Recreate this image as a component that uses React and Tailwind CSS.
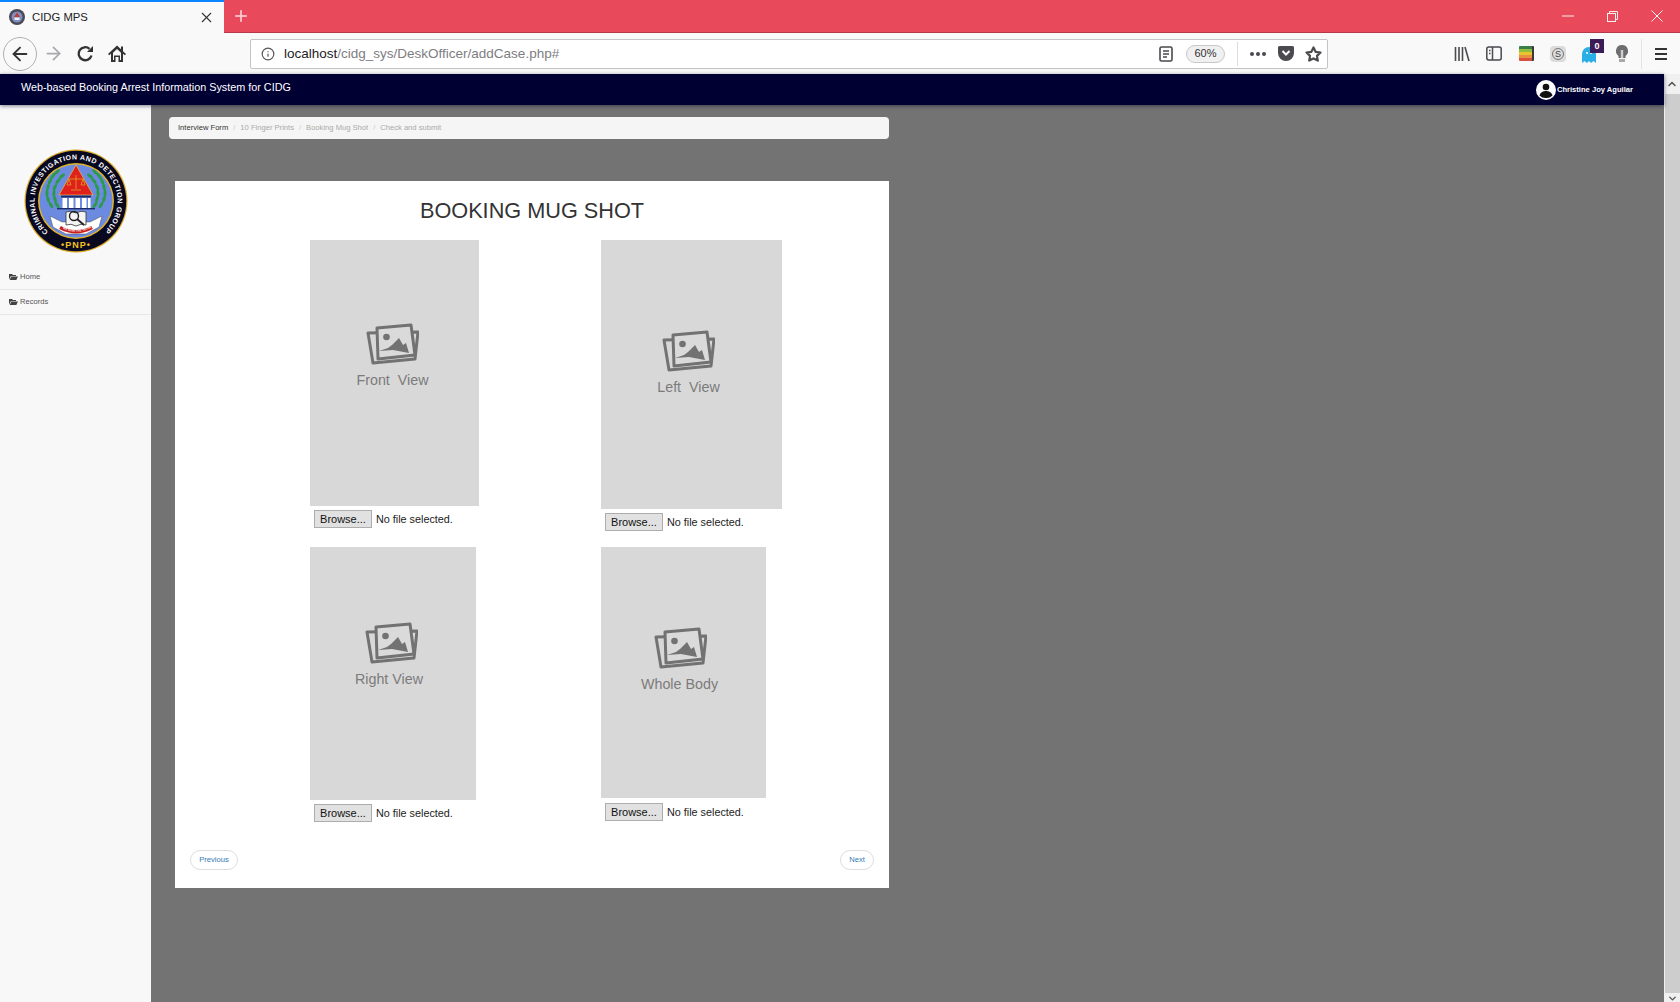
import { ArrowLeft, ArrowRight, Info, X, Plus, ChevronUp, ChevronDown } from "lucide-react";

const arial = "font-['Liberation_Sans',Arial,sans-serif]";

// leaves of one laurel branch, mirrored for the other side
const leaves = [[33, 23, -45], [29, 27, -55], [26, 32, -65], [24, 38, -80], [23, 44, -90], [24, 50, -105], [27, 56, -120], [38, 27, -40], [34, 32, -50], [31, 38, -65], [30, 44, -85], [31, 50, -105], [33, 56, -125]];

function Logo() {
  return (
    <svg viewBox="0 0 104 104" className="w-[104px] h-[104px]">
      <defs>
        <path id="ringArc" d="M 24.200 82.800 A 41.500 41.500 0 1 1 79.800 82.800" />
        <path id="bannerArc" d="M 36 78.500 Q 52 87 68 78.500" />
      </defs>
      <circle cx="52" cy="52" r="51.500" fill="#d8a928" />
      <circle cx="52" cy="52" r="50.300" fill="#080820" />
      <circle cx="52" cy="52" r="38" fill="#e0b32a" />
      <circle cx="52" cy="52" r="36.500" fill="#6c8be0" />
      <text fill="#fff" fontSize="7" fontWeight="700" fontFamily="Liberation Sans, Arial, sans-serif">
        <textPath href="#ringArc" textLength="198" lengthAdjust="spacing">CRIMINAL INVESTIGATION AND DETECTION GROUP</textPath>
      </text>
      <text x="52" y="99" textAnchor="middle" fill="#f3c31b" fontSize="9" fontWeight="700" fontFamily="Liberation Sans, Arial, sans-serif" letterSpacing="1">•PNP•</text>
      {leaves.map(([x, y, r], i) => (
        <g key={i} fill="#2a9a45">
          <ellipse cx={x} cy={y} rx="3.600" ry="1.500" transform={`rotate(${r} ${x} ${y})`} />
          <ellipse cx={104 - x} cy={y} rx="3.600" ry="1.500" transform={`rotate(${-r} ${104 - x} ${y})`} />
        </g>
      ))}
      <path d="M52 16 L69 46 H35 Z" fill="#e0201c" stroke="#f3d23a" strokeWidth=".6" />
      <path d="M52 26 V40 M45 30 H59 M45 30 L43 36 H47 Z M59 30 L57 36 H61 Z M47 41 H57" stroke="#d9a520" strokeWidth=".8" fill="none" />
      <rect x="37" y="46.500" width="30" height="2" fill="#1d2b6b" />
      <g fill="#fff">
        <rect x="38.500" y="49" width="4.500" height="10" />
        <rect x="45" y="49" width="4.500" height="10" />
        <rect x="51.500" y="49" width="4.500" height="10" />
        <rect x="58" y="49" width="4.500" height="10" />
        <rect x="64" y="49" width="2.500" height="10" />
      </g>
      <rect x="33" y="59" width="38" height="1.400" fill="#1d2b6b" />
      <path d="M26 67 L38 73 L66 73 L78 67 L75 78 L62 85 H42 L29 78 Z" fill="#fff" stroke="#333" strokeWidth=".4" />
      <path d="M36 78.500 Q52 87 68 78.500" stroke="#c81e1e" strokeWidth="3.600" fill="none" />
      <text fill="#fff" fontSize="2.800" fontWeight="700" fontFamily="Liberation Sans, Arial, sans-serif">
        <textPath href="#bannerArc" startOffset="3">WE SEEK THE TRUTH</textPath>
      </text>
      <path d="M42 63 Q47 61 52 64 Q57 61 62 63 V76 Q57 74 52 77 Q47 74 42 76 Z" fill="#f4f4f4" stroke="#333" strokeWidth=".8" />
      <circle cx="50" cy="67" r="4.500" fill="none" stroke="#222" strokeWidth="1.400" />
      <path d="M53 70 L60 76" stroke="#222" strokeWidth="1.800" />
    </svg>
  );
}

function Photos() {
  return (
    <svg viewBox="0 0 53 42" className="w-[53px] h-[42px] block text-[#737273]">
      <path d="M2 10 L52 9 L49 36 L7 40 Z" fill="none" stroke="currentColor" strokeWidth="3" strokeLinejoin="round" />
      <path d="M11 5 L45 2 L49 32 L12 36 Z" fill="#dbdadb" stroke="currentColor" strokeWidth="3" strokeLinejoin="round" />
      <circle cx="20.500" cy="14" r="3.300" fill="currentColor" />
      <path d="M13 28 L22 25 L26 22 L33 15 L37 22 L40 20 L43 30 L27 27 Z" fill="currentColor" />
    </svg>
  );
}

function ViewBox({ label, w, h, gap, iconX, labelX, pb }) {
  return (
    <div>
      <div className="bg-[#d9d8d9] flex flex-col items-center justify-center" style={{ width: w, height: h, paddingBottom: pb }}>
        <div style={{ transform: `translateX(${iconX}px)` }}><Photos /></div>
        <div className="text-[14.300px] leading-[18px] text-[#7b7b7b] mt-[6px] whitespace-pre" style={{ transform: `translateX(${labelX}px)` }}>{label}</div>
      </div>
      <div className="flex items-center gap-[4px] pl-[4px]" style={{ marginTop: gap }}>
        <button className="w-[58px] h-[18px] bg-[#e1e1e1] border border-[#adadad] text-[11px] leading-none text-[#111]">Browse...</button>
        <span className="text-[10.800px] text-[#222]">No file selected.</span>
      </div>
    </div>
  );
}

function ToolIcon({ children }) {
  return <div className="w-[32px] h-[32px] flex items-center justify-center text-[#4a4a4f]">{children}</div>;
}

export default function App() {
  return (
    <div className={`${arial} h-[1002px] w-[1680px] overflow-hidden flex flex-col bg-[#737373]`}>
      {/* tab strip */}
      <div className="h-[33px] bg-[#e84a5c] flex items-stretch shrink-0 border-b border-[#b23a4a]">
        <div className="w-[224px] h-[33px] bg-[#f9f9fa] border-t-2 border-[#0a84ff] flex items-center pl-[9px] pr-[9px]">
          <svg width="16" height="16" viewBox="0 0 16 16" className="-mt-[1px]">
            <circle cx="8" cy="8" r="8" fill="#4a4a55" />
            <circle cx="8" cy="8" r="5.500" fill="#7d8fc4" />
            <path d="M8 3.500 L11 8 H5 Z" fill="#c0392b" />
            <rect x="5.500" y="8.500" width="5" height="2.500" fill="#eee" />
          </svg>
          <span className="text-[11.300px] text-[#222] ml-[7px] flex-1 -mt-[1px]">CIDG MPS</span>
          <X size={17} strokeWidth={1.600} className="text-[#333]" />
        </div>
        <div className="w-[34px] flex items-center justify-center text-[#fbdde1]"><Plus size={18} strokeWidth={2} /></div>
        <div className="flex-1" />
        <div className="flex items-center text-[#fdeef0] pr-[17px] gap-[33px]">
          <svg width="12" height="2" viewBox="0 0 12 2" stroke="currentColor"><path d="M0 1h12" /></svg>
          <svg width="11" height="11" viewBox="0 0 11 11" fill="none" stroke="currentColor"><rect x=".5" y="2.500" width="8" height="8" /><path d="M2.500 2.500V.5h8v8h-2" /></svg>
          <svg width="12" height="12" viewBox="0 0 12 12" stroke="currentColor"><path d="M.5.5l11 11M11.500.5l-11 11" /></svg>
        </div>
      </div>

      {/* toolbar */}
      <div className="h-[41px] bg-[#f9f9fa] flex items-center shrink-0 relative">
        <div className="ml-[3px] w-[34px] h-[34px] rounded-full border border-[#b1b1b3] flex items-center justify-center text-[#333]"><ArrowLeft size={22} strokeWidth={2} /></div>
        <div className="w-[32px] flex justify-center text-[#a9a9ac]"><ArrowRight size={21} strokeWidth={2} /></div>
        <div className="w-[32px] flex justify-center">
          <svg width="17" height="17" viewBox="0 0 17 17" fill="none" stroke="#333" strokeWidth="2.300"><path d="M14.500 10.500A6.500 6.500 0 1 1 12.500 3.800" /><path d="M16 1v6h-6z" fill="#333" stroke="none" /></svg>
        </div>
        <div className="w-[32px] flex justify-center">
          <svg width="18" height="17" viewBox="0 0 18 17"><path d="M9 .5L0 9l1.200 1.300L3 8.700V17h4.500v-5h3v5H15V8.700l1.800 1.600L18 9l-3-2.800V1.500h-2v2.800z" fill="#333" /><path d="M5 7.700L9 4l4 3.700V15h-1v-4.500H6V15H5z" fill="#f9f9fa" /></svg>
        </div>
        <div className="ml-[117px] w-[1078px] h-[30px] bg-white border border-[#c4c4c6] rounded-[2px] flex items-center pl-[10px]">
          <Info size={14} className="text-[#555]" />
          <span className="ml-[9px] mt-[1px] text-[13.500px] text-[#222]">localhost<span className="text-[#7d7d82]">/cidg_sys/DeskOfficer/addCase.php#</span></span>
          <div className="flex-1" />
          <svg width="14" height="16" viewBox="0 0 14 16" fill="none" stroke="#4a4a4f" strokeWidth="1.600"><rect x="1" y="1" width="12" height="14" rx="1.500" /><path d="M4 5h6M4 8h6M4 11h4" /></svg>
          <div className="ml-[13px] w-[39px] h-[18px] rounded-full border border-[#c8c8ca] bg-[#f0f0f1] text-[11px] text-[#333] flex items-center justify-center">60%</div>
          <div className="w-px h-[24px] bg-[#dcdcde] ml-[12px]" />
          <div className="ml-[12px] w-[16px] flex gap-[2px]"><span className="w-[4px] h-[4px] rounded-full bg-[#4a4a4f]" /><span className="w-[4px] h-[4px] rounded-full bg-[#4a4a4f]" /><span className="w-[4px] h-[4px] rounded-full bg-[#4a4a4f]" /></div>
          <svg className="ml-[12px]" width="16" height="15" viewBox="0 0 16 15"><path d="M1.500 0h13A1.500 1.500 0 0 1 16 1.500V7a8 8 0 0 1-16 0V1.500A1.500 1.500 0 0 1 1.500 0z" fill="#4a4a4f" /><path d="M4.500 5L8 8.500 11.500 5" stroke="#fff" strokeWidth="2" fill="none" /></svg>
          <svg className="ml-[11px]" width="17" height="16" viewBox="0 0 17 16" fill="none" stroke="#4a4a4f" strokeWidth="2.200" strokeLinejoin="round"><path d="M8.500 1.500l2.100 4.300 4.900.7-3.500 3.400.8 4.700-4.300-2.200-4.300 2.200.8-4.700L1.500 6.500l4.900-.7z" /></svg>
          <div className="w-[5px]" />
        </div>
        <div className="ml-[118px] flex items-center">
          <ToolIcon><svg width="16" height="16" viewBox="0 0 16 16" fill="none" stroke="#4a4a4f" strokeWidth="1.600"><path d="M1.500 1v14M5 1v14M8.500 1v14M11 1l4 14" /></svg></ToolIcon>
          <ToolIcon><svg width="16" height="15" viewBox="0 0 16 15" fill="none" stroke="#4a4a4f" strokeWidth="1.500"><rect x=".8" y="1" width="14.400" height="13" rx="2" /><path d="M6.500 1v13M3 4.500h1.500M3 7.500h1.500" /></svg></ToolIcon>
          <ToolIcon>
            <div className="w-[15px] h-[15px] flex flex-col overflow-hidden rounded-[1px] border-r-2 border-[#3a3a3a]">
              <span className="h-[3px] bg-[#3b7d46]" /><span className="h-[3px] bg-[#8fbf3f]" /><span className="h-[3px] bg-[#e8c42f]" /><span className="h-[3px] bg-[#e8913f]" /><span className="h-[3px] bg-[#d9503f]" />
            </div>
          </ToolIcon>
          <ToolIcon><div className="w-[16px] h-[16px] rounded-[4px] bg-[#dcdcdc] flex items-center justify-center"><span className="w-[12px] h-[12px] rounded-full border border-[#777] text-[9px] leading-[10px] text-center text-[#444]">S</span></div></ToolIcon>
          <div className="w-[32px] h-[32px] flex items-center justify-center relative">
            <svg width="16" height="18" viewBox="0 0 16 18" className="-ml-[3px] mt-[2px]"><path d="M1 8a7 7 0 0 1 14 0v9l-2.500-2-2.500 2-2-2-2 2-2.500-2L1 17z" fill="#29aee6" /><circle cx="6" cy="7" r="1" fill="#fff" /><circle cx="10" cy="7" r="1" fill="#fff" /></svg>
            <div className="absolute top-[1px] right-[2px] w-[14px] h-[14px] bg-[#3c1c56] text-white text-[9px] font-bold leading-[14px] text-center">0</div>
          </div>
          <ToolIcon><svg width="12" height="17" viewBox="0 0 12 17"><path d="M6 0a6 6 0 0 1 3.500 10.900V13h-7v-2.100A6 6 0 0 1 6 0z" fill="#6d6d70" /><rect x="4.800" y="5" width="2.400" height="8" fill="#cfcfcf" /><rect x="3" y="14" width="6" height="3" fill="#a8a8a8" /></svg></ToolIcon>
          <div className="w-px h-[30px] bg-[#e3e3e5] ml-[3px]" />
          <div className="w-[38px] flex justify-center"><svg width="14" height="14" viewBox="0 0 14 14" stroke="#333" strokeWidth="2"><path d="M1 2h12M1 7h12M1 12h12" /></svg></div>
        </div>
      </div>

      {/* page + scrollbar */}
      <div className="flex-1 flex min-h-0">
        <div className="flex-1 flex flex-col min-w-0">
          <div className="h-[31px] bg-[#000033] flex items-center shrink-0 pl-[21px] pr-[31px] shadow-[0_1px_4px_rgba(0,0,40,.5)] relative z-10 text-white">
            <span className="text-[10.800px] -mt-[4px]">Web-based Booking Arrest Information System for CIDG</span>
            <div className="flex-1" />
            <svg width="20" height="20" viewBox="0 0 20 20"><circle cx="10" cy="10" r="10" fill="#fff" /><circle cx="10" cy="7" r="3.300" fill="#111" /><path d="M3.500 15.500c1-3.500 4-4.500 6.500-4.500s5.500 1 6.500 4.500A8.500 8.500 0 0 1 10 18a8.500 8.500 0 0 1-6.500-2.500z" fill="#111" /></svg>
            <span className="text-[7.600px] font-bold ml-[1px]">Christine Joy Aguilar</span>
          </div>
          <div className="flex-1 flex min-h-0">
            <aside className="w-[151px] bg-[#f8f8f8] shrink-0">
              <div className="pt-[44px] pl-[24px] h-[160px]"><Logo /></div>
              <ul className="text-[7.600px] text-[#555]">
                {["Home", "Records"].map((item) => (
                  <li key={item} className="h-[25px] border-b border-[#e7e7e7] flex items-center pl-[9px] gap-[2px]">
                    <svg width="9" height="7" viewBox="0 0 9 7" fill="#444" className="-mt-[1px]"><path d="M0 1h3l1 1h3v1H2L0 6.500z" /><path d="M2.300 3.500H9L7.300 7H.7z" /></svg>
                    {item}
                  </li>
                ))}
              </ul>
            </aside>
            <main className="flex-1 pt-[12px] pl-[18px]">
              <nav className="w-[720px] h-[22px] bg-[#f5f5f5] rounded-[4px] flex items-center pl-[9px] text-[7.600px] text-[#aaa]">
                <span className="text-[#333]">Interview Form</span>
                <span className="mx-[5px] text-[#ccc]">/</span>
                <span>10 Finger Prints</span>
                <span className="mx-[5px] text-[#ccc]">/</span>
                <span>Booking Mug Shot</span>
                <span className="mx-[5px] text-[#ccc]">/</span>
                <span>Check and submit</span>
              </nav>
              <section className="ml-[6px] mt-[42px] w-[714px] h-[707px] bg-white flex flex-col px-[15px]">
                <h1 className="h-[59px] pt-[15px] text-center text-[21.700px] leading-[30px] text-[#333]">BOOKING MUG SHOT</h1>
                <div className="grid grid-cols-[291px_1fr] grid-rows-[307px_auto] pl-[120px]">
                  <ViewBox label="Front  View" w={169} h={266} gap={4} iconX={-2} labelX={-2} pb={34} />
                  <ViewBox label="Left  View" w={181} h={269} gap={4} iconX={-3} labelX={-3} pb={24} />
                  <ViewBox label="Right View" w={166} h={253} gap={4} iconX={-2} labelX={-4} pb={37} />
                  <ViewBox label="Whole Body" w={165} h={251} gap={5} iconX={-3} labelX={-4} pb={26} />
                </div>
                <div className="mt-auto mb-[18px] flex justify-between text-[7.600px] text-[#337ab7]">
                  <button className="w-[48px] h-[20px] rounded-full border border-[#ddd] bg-white">Previous</button>
                  <button className="w-[34px] h-[20px] rounded-full border border-[#ddd] bg-white">Next</button>
                </div>
              </section>
            </main>
          </div>
        </div>
        <div className="w-[16px] bg-[#f0f0f0] flex flex-col items-center shrink-0">
          <div className="h-[20px] flex items-center text-[#555]"><ChevronUp size={12} strokeWidth={3} /></div>
          <div className="w-[15px] flex-1 bg-[#cdcdcd]" />
          <div className="h-[9px] flex items-start text-[#555]"><ChevronDown size={11} strokeWidth={3} /></div>
        </div>
      </div>
    </div>
  );
}
